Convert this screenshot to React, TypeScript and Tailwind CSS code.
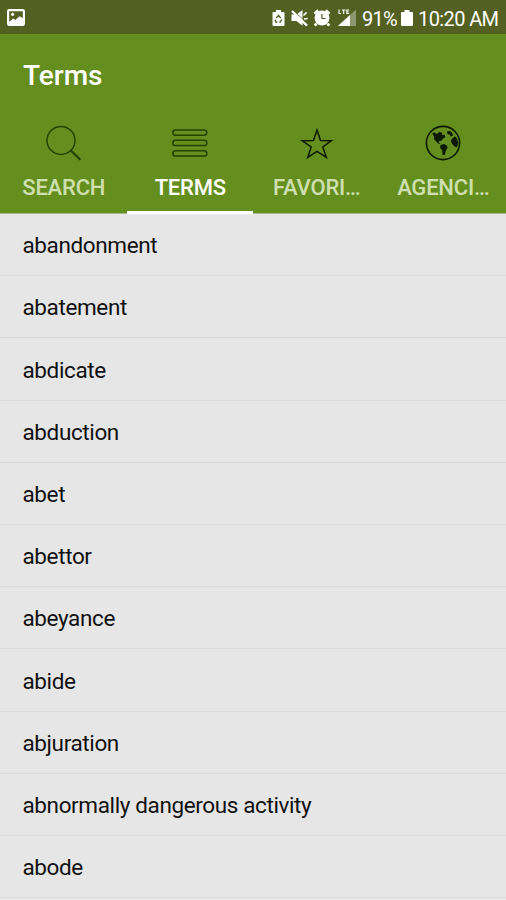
import { useState } from "react";
import type { ReactNode } from "react";
import clsx from "clsx";

interface Tab {
  id: string;
  label: string;
  icon: ReactNode;
}

const TERMS = [
  "abandonment",
  "abatement",
  "abdicate",
  "abduction",
  "abet",
  "abettor",
  "abeyance",
  "abide",
  "abjuration",
  "abnormally dangerous activity",
  "abode",
];

/* ---------- Tab icons ---------- */

function SearchIcon() {
  return (
    <svg width="36" height="36" viewBox="0 0 36 36" fill="none" stroke="#234200" strokeWidth="1.5">
      <circle cx="15" cy="15.4" r="14" />
      <path d="M24.7 25.4 34.4 34.8" strokeWidth="2.1" />
    </svg>
  );
}

function TermsIcon() {
  return (
    <svg width="36" height="36" viewBox="0 0 36 36" fill="none" stroke="#234200" strokeWidth="1.5">
      <rect x="0.8" y="5" width="34" height="5.2" rx="2.6" />
      <rect x="0.8" y="15.3" width="34" height="5.2" rx="2.6" />
      <rect x="0.8" y="25.8" width="34" height="5.2" rx="2.6" />
    </svg>
  );
}

function StarIcon() {
  return (
    <svg width="36" height="36" viewBox="0 0 36 36" fill="none" stroke="#0b1a00" strokeWidth="1.5">
      <path d="M18 5 21.5 15.4 32.4 15.7 23.8 22 27.4 32.4 18 26.4 8.7 32.4 12.2 22 3.2 15.7 14.5 15.4Z" />
    </svg>
  );
}

function GlobeIcon() {
  return (
    <svg width="36" height="36" viewBox="0 0 36 36">
      <circle cx="18" cy="18" r="16.6" fill="none" stroke="#0b1a00" strokeWidth="1.6" />
      <g fill="#0b1a00">
        <path d="M7.2 8.6 9.2 7.2 11.8 9 14.6 6.8 17 7.9 17.2 10.2 19.5 9.6 20.4 12.2 18 13.5 16.8 15.4 14.5 16 13.5 17.2 15.5 19.1 13.4 18.7 11.2 16.6 9.2 14.4 9 11.3Z" />
        <path d="M15.4 19.9 19 19 22.2 20.8 22.4 23 20.8 25.7 19.8 30 17.6 30 17.3 25.6 15.2 22.9Z" />
        <path d="M22 6.6 25.2 5.9 27.2 8 28.1 10.4 25.7 11.6 24.8 9.6 22.6 9.2Z" />
        <path d="M26.8 13.9 30 11.3 31.9 13.6 33.3 18 31.8 22.6 29.3 21.3 27 18.7 25.8 16Z" />
      </g>
    </svg>
  );
}

/* ---------- Status bar ---------- */

function PictureIcon() {
  return (
    <svg width="18" height="17" viewBox="0 0 18 17">
      <rect x="1.1" y="1.1" width="15.8" height="14.8" rx="1.2" fill="none" stroke="#fff" strokeWidth="2.2" />
      <path d="M2 13 6.2 9.5 8.3 11 12.5 7.2 16 9.2V15.5H2Z" fill="#fff" />
      <circle cx="5.6" cy="5.3" r="1.6" fill="#fff" />
    </svg>
  );
}

function StatusIcons() {
  return (
    <svg className="mt-px shrink-0" width="85" height="18" viewBox="0 0 85 18" fill="#fff">
      {/* battery saver */}
      <path d="M4 1h5v2h2.5q1 0 1 1v12q0 1-1 1h-10q-1 0-1-1V4q0-1 1-1H4Z" />
      <path d="M4.2 9.2 6.5 6.3 8.8 9.2M9.8 10.5 8.4 13H7.3M5.4 13H3.8L3 10.8" fill="none" stroke="#536022" strokeWidth="1.3" />
      {/* muted speaker */}
      <path d="M19.5 5.5h5L30.5 1v15.7l-6-4.7h-5Z" />
      <path d="M31.5 6.5 34.6 3.4M32 10l3.6-.6" stroke="#fff" strokeWidth="1.5" />
      <path d="M21.6 1.6 36.5 15.6" stroke="#536022" strokeWidth="1" />
      <path d="M20 2 35 16.6" stroke="#fff" strokeWidth="2.4" />
      {/* alarm */}
      <circle cx="50" cy="9" r="7.5" />
      <path d="M42.5 4.7 46.3 1.4M57.5 4.7 53.7 1.4M44.5 14.5 42.8 16.7M55.5 14.5l1.7 2.2" stroke="#fff" strokeWidth="2.8" />
      <path d="M50 5v4.5h3.6" fill="none" stroke="#536022" strokeWidth="1.2" />
      {/* signal */}
      <path d="M66 17 84 .5V17Z" opacity="0.35" />
      <path d="M66 17 78 6v11Z" />
      <path d="M67 .5v4h2.2M69.9 1h3.6M71.7 1v4M77.2 1h-2.4v3.5h2.4M74.8 2.8h2" fill="none" stroke="#fff" strokeWidth="1.1" />
    </svg>
  );
}

function StatusBar() {
  return (
    <div className="flex h-[34px] shrink-0 items-center justify-between bg-[#536022] pl-[7px] pr-2 text-white">
      <PictureIcon />
      <div className="flex items-center">
        <StatusIcons />
        <span className="mt-[3px] ml-[5px] w-[39px] text-[20px] tracking-[-0.7px] whitespace-nowrap">91%</span>
        <svg className="mt-[2px] mr-[5px] shrink-0" width="12" height="16" viewBox="0 0 12 16" fill="#fff">
          <path d="M3.5 0h5v2H11q1 0 1 1v12q0 1-1 1H1q-1 0-1-1V3q0-1 1-1h2.5Z" />
        </svg>
        <span className="mt-[3px] w-[80px] text-[20px] tracking-[-0.6px] whitespace-nowrap">10:20 AM</span>
      </div>
    </div>
  );
}

const TABS: Tab[] = [
  { id: "search", label: "SEARCH", icon: <SearchIcon /> },
  { id: "terms", label: "TERMS", icon: <TermsIcon /> },
  { id: "favorites", label: "FAVORI…", icon: <StarIcon /> },
  { id: "agencies", label: "AGENCI…", icon: <GlobeIcon /> },
];

export default function App() {
  const [active, setActive] = useState("terms");

  return (
    <div className="flex h-[900px] w-[506px] flex-col overflow-hidden bg-[#e6e6e6] font-[Roboto,sans-serif]">
      <StatusBar />

      <header className="h-[180px] shrink-0 border-b border-[#a7b98b] bg-[#648e1d]">
        <h1 className="pt-[22px] pl-[23px] text-[28px] leading-10 font-medium text-white">Terms</h1>

        <nav className="mt-[29px] grid h-[89px] grid-cols-4">
          {TABS.map((tab) => (
            <button
              key={tab.id}
              onClick={() => setActive(tab.id)}
              className={clsx(
                "flex flex-col items-center border-b-[3px] pl-px text-[22px] leading-[26px] font-medium tracking-[-0.2px]",
                active === tab.id
                  ? "border-white text-white"
                  : "border-transparent text-[#cfe0b0]",
              )}
            >
              {tab.icon}
              <span className="mt-[14px] whitespace-nowrap">{tab.label}</span>
            </button>
          ))}
        </nav>
      </header>

      <ul>
        {TERMS.map((term) => (
          <li
            key={term}
            className="flex h-[62.2px] items-center border-b border-[#dbdbdb] pt-[3px] pl-[22.5px] text-[22.5px] tracking-[-0.38px] text-[#111]"
          >
            {term}
          </li>
        ))}
      </ul>
    </div>
  );
}
